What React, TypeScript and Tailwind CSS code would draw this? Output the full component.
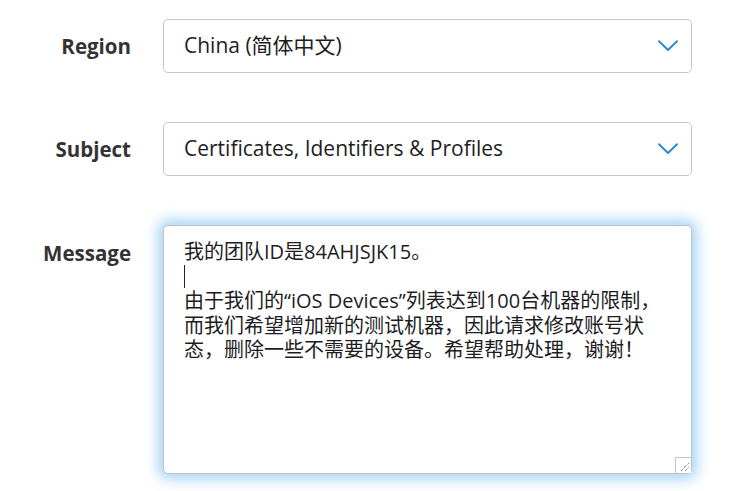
import React from "react";

const font = { fontFamily: '"Open Sans", "Noto Sans CJK SC", sans-serif' };

function Chevron() {
  return (
    <svg width="20" height="12" viewBox="0 0 20 12" fill="none" className="shrink-0">
      <path d="M1 1.2 L10 10 L19 1.2" stroke="#2a8bd6" strokeWidth="2" strokeLinecap="round" strokeLinejoin="round" />
    </svg>
  );
}

function SelectRow({ label, value }: { label: string; value: string }) {
  return (
    <div className="flex items-center">
      <div className="w-[131px] shrink-0 text-right text-[20.5px] font-bold text-[#333]">{label}</div>
      <div className="ml-[32px] flex h-[54px] w-[529px] items-center justify-between rounded-[5px] border border-[#c6c6c6] bg-white pl-5 pr-[13px]">
        <span className="text-[21px] text-[#1d1d1f]">{value}</span>
        <Chevron />
      </div>
    </div>
  );
}

export default function App() {
  return (
    <div className="min-h-screen w-[756px] bg-white pt-[19px]" style={font}>
      <div className="flex flex-col gap-[49px]">
        <SelectRow label="Region" value="China (简体中文)" />
        <SelectRow label="Subject" value="Certificates, Identifiers & Profiles" />
        <div className="flex items-start">
          <div className="w-[131px] shrink-0 pt-[16px] text-right text-[20.5px] font-bold leading-[24.5px] text-[#333]">
            Message
          </div>
          <div className="relative ml-[32px] h-[249px] w-[529px] rounded-[5px] border border-[#bfc3c7] bg-white pl-5 pr-4 pt-[14px] text-[20px] leading-[24.5px] text-[#1d1d1f] shadow-[0_0_14px_5px_rgba(20,140,230,0.38)]">
            <div>我的团队ID是84AHJSJK15。</div>
            <div className="flex h-[24.5px] items-center">
              <span className="block h-[23px] w-px bg-[#222]" />
            </div>
            <div>由于我们的“iOS Devices”列表达到100台机器的限制，</div>
            <div>而我们希望增加新的测试机器，因此请求修改账号状</div>
            <div>态，删除一些不需要的设备。希望帮助处理，谢谢！</div>
            <div className="absolute bottom-0 right-0 h-[16px] w-[16px] border-l border-t border-[#c6c6c6] bg-white">
              <svg width="15" height="15" viewBox="0 0 15 15" className="block">
                <path d="M5 13 L13 5 M9 13 L13 9" stroke="#555" strokeWidth="1" strokeDasharray="1 1" />
              </svg>
            </div>
          </div>
        </div>
      </div>
    </div>
  );
}
